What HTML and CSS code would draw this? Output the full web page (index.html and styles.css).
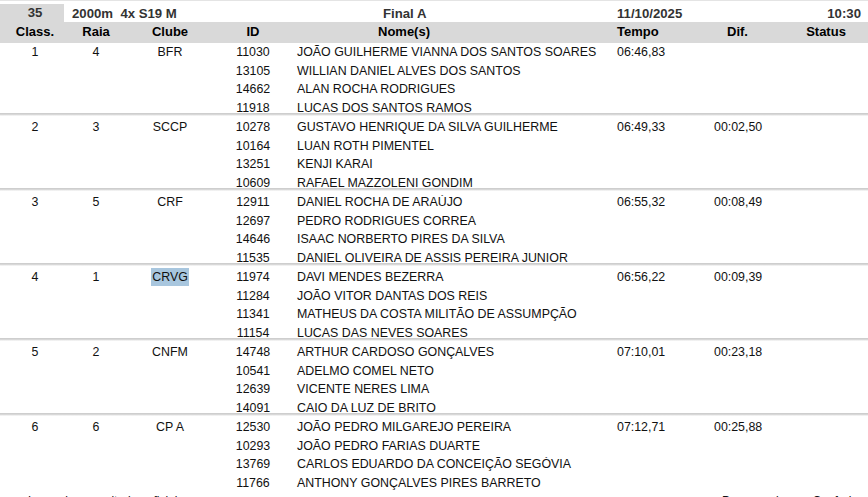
FILE: index.html
```html
<!DOCTYPE html>
<html lang="pt">
<head>
<meta charset="utf-8">
<title>Resultado Final A</title>
<link rel="stylesheet" href="styles.css">
</head>
<body>
<div class="page">
  <div class="topline"></div>
  <div class="event">
    <div class="ev-num">35</div>
    <div class="ev-name">2000m&nbsp; 4x S19 M</div>
    <div class="ev-phase">Final A</div>
    <div class="ev-date">11/10/2025</div>
    <div class="ev-time">10:30</div>
  </div>
  <div class="row head">
    <div class="c-class">Class.</div>
    <div class="c-raia">Raia</div>
    <div class="c-clube">Clube</div>
    <div class="c-id">ID</div>
    <div class="c-name head-name">Nome(s)</div>
    <div class="c-tempo">Tempo</div>
    <div class="c-dif head-dif">Dif.</div>
    <div class="c-status">Status</div>
  </div>

  <div class="group">
    <div class="row"><div class="c-class">1</div><div class="c-raia">4</div><div class="c-clube">BFR</div><div class="c-id">11030</div><div class="c-name">JOÃO GUILHERME VIANNA DOS SANTOS SOARES</div><div class="c-tempo">06:46,83</div><div class="c-dif"></div><div class="c-status"></div></div>
    <div class="row"><div class="c-class"></div><div class="c-raia"></div><div class="c-clube"></div><div class="c-id">13105</div><div class="c-name">WILLIAN DANIEL ALVES DOS SANTOS</div></div>
    <div class="row"><div class="c-class"></div><div class="c-raia"></div><div class="c-clube"></div><div class="c-id">14662</div><div class="c-name">ALAN ROCHA RODRIGUES</div></div>
    <div class="row"><div class="c-class"></div><div class="c-raia"></div><div class="c-clube"></div><div class="c-id">11918</div><div class="c-name">LUCAS DOS SANTOS RAMOS</div></div>
  </div>

  <div class="group">
    <div class="row"><div class="c-class">2</div><div class="c-raia">3</div><div class="c-clube">SCCP</div><div class="c-id">10278</div><div class="c-name">GUSTAVO HENRIQUE DA SILVA GUILHERME</div><div class="c-tempo">06:49,33</div><div class="c-dif">00:02,50</div><div class="c-status"></div></div>
    <div class="row"><div class="c-class"></div><div class="c-raia"></div><div class="c-clube"></div><div class="c-id">10164</div><div class="c-name">LUAN ROTH PIMENTEL</div></div>
    <div class="row"><div class="c-class"></div><div class="c-raia"></div><div class="c-clube"></div><div class="c-id">13251</div><div class="c-name">KENJI KARAI</div></div>
    <div class="row"><div class="c-class"></div><div class="c-raia"></div><div class="c-clube"></div><div class="c-id">10609</div><div class="c-name">RAFAEL MAZZOLENI GONDIM</div></div>
  </div>

  <div class="group">
    <div class="row"><div class="c-class">3</div><div class="c-raia">5</div><div class="c-clube">CRF</div><div class="c-id">12911</div><div class="c-name">DANIEL ROCHA DE ARAÚJO</div><div class="c-tempo">06:55,32</div><div class="c-dif">00:08,49</div><div class="c-status"></div></div>
    <div class="row"><div class="c-class"></div><div class="c-raia"></div><div class="c-clube"></div><div class="c-id">12697</div><div class="c-name">PEDRO RODRIGUES CORREA</div></div>
    <div class="row"><div class="c-class"></div><div class="c-raia"></div><div class="c-clube"></div><div class="c-id">14646</div><div class="c-name">ISAAC NORBERTO PIRES DA SILVA</div></div>
    <div class="row"><div class="c-class"></div><div class="c-raia"></div><div class="c-clube"></div><div class="c-id">11535</div><div class="c-name">DANIEL OLIVEIRA DE ASSIS PEREIRA JUNIOR</div></div>
  </div>

  <div class="group">
    <div class="row"><div class="c-class">4</div><div class="c-raia">1</div><div class="c-clube"><span class="sel">CRVG</span></div><div class="c-id">11974</div><div class="c-name">DAVI MENDES BEZERRA</div><div class="c-tempo">06:56,22</div><div class="c-dif">00:09,39</div><div class="c-status"></div></div>
    <div class="row"><div class="c-class"></div><div class="c-raia"></div><div class="c-clube"></div><div class="c-id">11284</div><div class="c-name">JOÃO VITOR DANTAS DOS REIS</div></div>
    <div class="row"><div class="c-class"></div><div class="c-raia"></div><div class="c-clube"></div><div class="c-id">11341</div><div class="c-name">MATHEUS DA COSTA MILITÃO DE ASSUMPÇÃO</div></div>
    <div class="row"><div class="c-class"></div><div class="c-raia"></div><div class="c-clube"></div><div class="c-id">11154</div><div class="c-name">LUCAS DAS NEVES SOARES</div></div>
  </div>

  <div class="group">
    <div class="row"><div class="c-class">5</div><div class="c-raia">2</div><div class="c-clube">CNFM</div><div class="c-id">14748</div><div class="c-name">ARTHUR CARDOSO GONÇALVES</div><div class="c-tempo">07:10,01</div><div class="c-dif">00:23,18</div><div class="c-status"></div></div>
    <div class="row"><div class="c-class"></div><div class="c-raia"></div><div class="c-clube"></div><div class="c-id">10541</div><div class="c-name">ADELMO COMEL NETO</div></div>
    <div class="row"><div class="c-class"></div><div class="c-raia"></div><div class="c-clube"></div><div class="c-id">12639</div><div class="c-name">VICENTE NERES LIMA</div></div>
    <div class="row"><div class="c-class"></div><div class="c-raia"></div><div class="c-clube"></div><div class="c-id">14091</div><div class="c-name">CAIO DA LUZ DE BRITO</div></div>
  </div>

  <div class="group last">
    <div class="row"><div class="c-class">6</div><div class="c-raia">6</div><div class="c-clube">CP A</div><div class="c-id">12530</div><div class="c-name">JOÃO PEDRO MILGAREJO PEREIRA</div><div class="c-tempo">07:12,71</div><div class="c-dif">00:25,88</div><div class="c-status"></div></div>
    <div class="row"><div class="c-class"></div><div class="c-raia"></div><div class="c-clube"></div><div class="c-id">10293</div><div class="c-name">JOÃO PEDRO FARIAS DUARTE</div></div>
    <div class="row"><div class="c-class"></div><div class="c-raia"></div><div class="c-clube"></div><div class="c-id">13769</div><div class="c-name">CARLOS EDUARDO DA CONCEIÇÃO SEGÓVIA</div></div>
    <div class="row"><div class="c-class"></div><div class="c-raia"></div><div class="c-clube"></div><div class="c-id">11766</div><div class="c-name">ANTHONY GONÇALVES PIRES BARRETO</div></div>
  </div>

  <div class="footer">
    <div class="foot-left">Legenda e resultados oficiais</div>
    <div class="foot-right">Processado por: Confederação</div>
  </div>
</div>
</body>
</html>
```

FILE: styles.css
```css
html, body {
  margin: 0;
  padding: 0;
  background: #ffffff;
}

.page {
  width: 868px;
  font-family: "Liberation Sans", Arial, sans-serif;
  color: #111111;
  overflow: hidden;
}

.topline {
  height: 1px;
  background: #e4e4e4;
  margin-bottom: 3px;
}

.event {
  display: grid;
  grid-template-columns: 64px 233px 320px 1fr auto;
  height: 18px;
  align-items: center;
  font-size: 13.2px;
  font-weight: bold;
  color: #333333;
}

.ev-num {
  background: #d9d9d9;
  height: 18px;
  line-height: 18px;
  text-align: center;
  padding-left: 6px;
  box-sizing: border-box;
}

.ev-name {
  padding-left: 8px;
}

.ev-phase {
  padding-left: 86px;
}

.ev-time {
  padding-right: 7px;
}

.row {
  display: grid;
  grid-template-columns: 70px 52px 96px 70px 324px 88px 84px 84px;
  height: 18.75px;
  align-items: center;
  font-size: 12.4px;
  white-space: nowrap;
}

.row.head {
  height: 20.6px;
  background: #d9d9d9;
  font-size: 13px;
  font-weight: bold;
  color: #000000;
  align-items: start;
  line-height: 19px;
}

.c-class, .c-raia, .c-clube, .c-id, .c-status {
  text-align: center;
}

.c-name {
  padding-left: 9px;
  overflow: hidden;
}

.head-name {
  padding-left: 90px;
}

.c-tempo {
  padding-left: 5px;
}

.c-dif {
  padding-left: 14px;
}

.head-dif {
  padding-left: 27px;
}

.sel {
  background: #a8c6de;
  padding: 2px 1px 2px 1px;
}

.group {
  height: 75px;
  background: linear-gradient(#c9c9c9, #e2e2e2) no-repeat 0 calc(100% - 2px) / 100% 2.5px;
}

.group.last {
  background: none;
}

.footer {
  display: flex;
  justify-content: space-between;
  font-size: 12px;
  line-height: 14px;
  padding-top: 1px;
  color: #111111;
}

.foot-left {
  padding-left: 28px;
}

.foot-right {
  margin-right: -20px;
}
```
